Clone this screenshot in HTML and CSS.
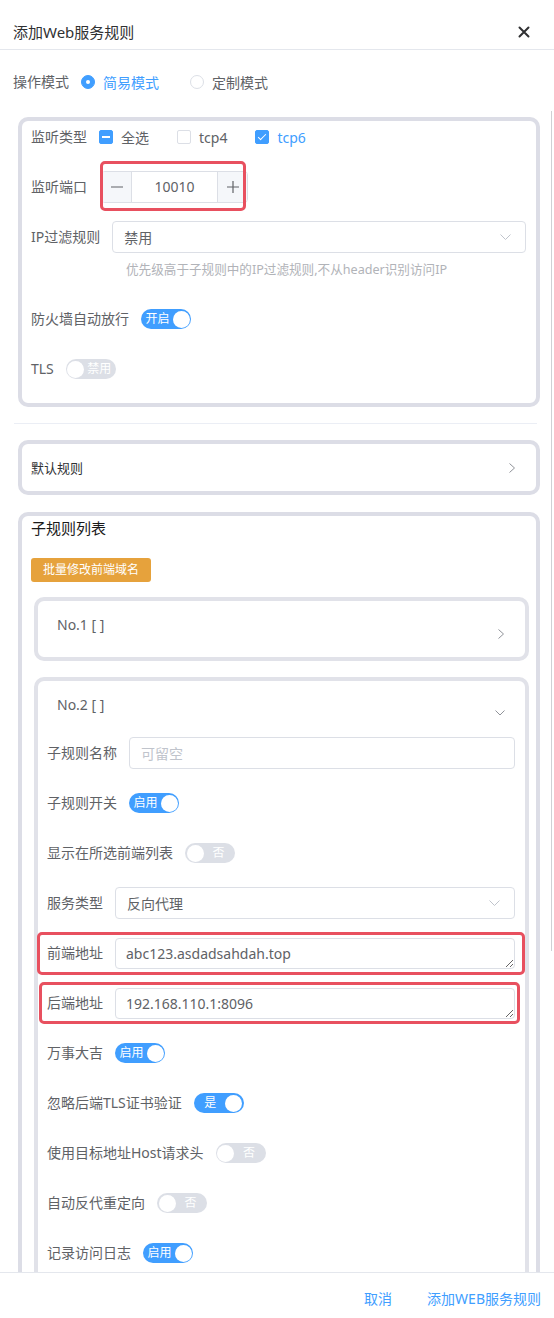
FILE: index.html
```html
<!DOCTYPE html>
<html lang="zh-CN">
<head>
<meta charset="utf-8">
<title>添加Web服务规则</title>
<link rel="stylesheet" href="styles.css">
</head>
<body>
<div class="dialog">
  <header class="dlg-head">
    <span class="dlg-title">添加Web服务规则</span>
    <svg class="close" width="12" height="12" viewBox="0 0 12 12"><path d="M1.5 1.5L10.5 10.5M10.5 1.5L1.5 10.5" stroke="#303133" stroke-width="2" stroke-linecap="round"/></svg>
  </header>

  <div class="dlg-body">
    <span class="scroll-thumb"></span>
    <div class="row mode-row">
      <span class="label">操作模式</span>
      <span class="radio on"><i class="radio-dot"></i><span class="radio-text">简易模式</span></span>
      <span class="radio"><i class="radio-dot"></i><span class="radio-text">定制模式</span></span>
    </div>

    <section class="card card-main">
      <div class="row">
        <span class="label">监听类型</span>
        <span class="check indet"><i class="box"></i><span>全选</span></span>
        <span class="check"><i class="box"></i><span>tcp4</span></span>
        <span class="check checked"><i class="box"></i><span>tcp6</span></span>
      </div>
      <div class="row">
        <span class="label">监听端口</span>
        <div class="num-wrap">
          <div class="num">
            <span class="num-btn minus"><svg width="12" height="12" viewBox="0 0 12 12"><path d="M0 6H12" stroke="#606266" stroke-width="1.2"/></svg></span>
            <span class="num-val">10010</span>
            <span class="num-btn plus"><svg width="12" height="12" viewBox="0 0 12 12"><path d="M0 6H12M6 0V12" stroke="#606266" stroke-width="1.2"/></svg></span>
          </div>
          <span class="mark mark-port"></span>
        </div>
      </div>
      <div class="row row-ip">
        <span class="label">IP过滤规则</span>
        <div class="select"><span class="sel-val">禁用</span><svg width="11" height="6" viewBox="0 0 11 6"><path d="M0.5 0.5L5.5 5.5L10.5 0.5" fill="none" stroke="#c0c4cc" stroke-width="1"/></svg></div>
      </div>
      <div class="hint">优先级高于子规则中的IP过滤规则,不从header识别访问IP</div>
      <div class="row">
        <span class="label">防火墙自动放行</span>
        <span class="switch on"><span class="sw-text">开启</span><i class="knob"></i></span>
      </div>
      <div class="row">
        <span class="label">TLS</span>
        <span class="switch off"><i class="knob"></i><span class="sw-text">禁用</span></span>
      </div>
    </section>

    <div class="divider"></div>

    <section class="card card-default">
      <span class="default-title">默认规则</span>
      <svg width="6" height="10" viewBox="0 0 6 10"><path d="M0.5 0.5L5.5 5L0.5 9.5" fill="none" stroke="#909399" stroke-width="1"/></svg>
    </section>

    <section class="card card-sub">
      <div class="sub-title">子规则列表</div>
      <div class="btn-line"><span class="btn-warn">批量修改前端域名</span></div>

      <div class="rule">
        <div class="rule-head">
          <span class="rule-title">No.1 [ ]</span>
          <svg class="chev-r" width="6" height="10" viewBox="0 0 6 10"><path d="M0.5 0.5L5.5 5L0.5 9.5" fill="none" stroke="#909399" stroke-width="1"/></svg>
        </div>
      </div>

      <div class="rule rule-open">
        <div class="rule-head">
          <span class="rule-title">No.2 [ ]</span>
          <svg class="chev-d" width="10" height="6" viewBox="0 0 10 6"><path d="M0.5 0.5L5 5L9.5 0.5" fill="none" stroke="#909399" stroke-width="1"/></svg>
        </div>
        <div class="rule-body">
          <div class="row">
            <span class="label">子规则名称</span>
            <div class="input"><span class="placeholder">可留空</span></div>
          </div>
          <div class="row">
            <span class="label">子规则开关</span>
            <span class="switch on"><span class="sw-text">启用</span><i class="knob"></i></span>
          </div>
          <div class="row">
            <span class="label">显示在所选前端列表</span>
            <span class="switch off"><i class="knob"></i><span class="sw-text">否</span></span>
          </div>
          <div class="row">
            <span class="label">服务类型</span>
            <div class="select"><span class="sel-val">反向代理</span><svg width="11" height="6" viewBox="0 0 11 6"><path d="M0.5 0.5L5.5 5.5L10.5 0.5" fill="none" stroke="#c0c4cc" stroke-width="1"/></svg></div>
          </div>
          <div class="row">
            <span class="label">前端地址</span>
            <textarea class="ta" rows="1">abc123.asdadsahdah.top</textarea>
            <span class="mark mark-front"></span>
          </div>
          <div class="row">
            <span class="label">后端地址</span>
            <textarea class="ta" rows="1">192.168.110.1:8096</textarea>
            <span class="mark mark-back"></span>
          </div>
          <div class="row">
            <span class="label">万事大吉</span>
            <span class="switch on"><span class="sw-text">启用</span><i class="knob"></i></span>
          </div>
          <div class="row">
            <span class="label">忽略后端TLS证书验证</span>
            <span class="switch on"><span class="sw-text">是</span><i class="knob"></i></span>
          </div>
          <div class="row">
            <span class="label">使用目标地址Host请求头</span>
            <span class="switch off"><i class="knob"></i><span class="sw-text">否</span></span>
          </div>
          <div class="row">
            <span class="label">自动反代重定向</span>
            <span class="switch off"><i class="knob"></i><span class="sw-text">否</span></span>
          </div>
          <div class="row">
            <span class="label">记录访问日志</span>
            <span class="switch on"><span class="sw-text">启用</span><i class="knob"></i></span>
          </div>
        </div>
      </div>
    </section>
  </div>

  <footer class="dlg-foot">
    <span class="foot-btn">取消</span>
    <span class="foot-btn">添加WEB服务规则</span>
  </footer>
</div>
</body>
</html>
```

FILE: styles.css
```css
* { box-sizing: border-box; }
html, body { margin: 0; padding: 0; }
body {
  width: 554px;
  height: 1318px;
  overflow: hidden;
  background: #fff;
  font-family: "Noto Sans", "Noto Sans CJK SC", sans-serif;
  font-size: 14px;
  color: #606266;
}

.dialog { display: flex; flex-direction: column; height: 1318px; }

.dlg-head {
  flex: none;
  height: 50px;
  padding: 15px 24px 0 13px;
  border-bottom: 1px solid #e4e7ed;
  display: flex;
  align-items: center;
  justify-content: space-between;
}
.dlg-title { font-size: 15px; line-height: 20px; color: #303133; }

.dlg-body {
  position: relative;
  flex: 1;
  min-height: 0;
  overflow: hidden;
  padding: 16px 14px 0 13px;
}
.scroll-thumb {
  position: absolute; right: 2px; top: 61px; width: 1px; height: 840px;
  background: #cfd0d4;
}

.dlg-foot {
  flex: none;
  height: 46px;
  border-top: 1px solid #e4e7ed;
  display: flex;
  justify-content: flex-end;
  gap: 35px;
  padding: 15px 13px 0 0;
}
.foot-btn { color: #409eff; line-height: 22px; }

/* form rows */
.row {
  position: relative;
  display: flex;
  align-items: center;
  height: 32px;
  margin-bottom: 18px;
}
.label { padding-right: 12px; white-space: nowrap; line-height: 32px; color: #606266; }
.mode-row { margin-bottom: 19px; }

/* radio */
.radio { display: inline-flex; align-items: center; margin-right: 31px; }
.radio-dot {
  width: 14px; height: 14px; border-radius: 50%;
  border: 1px solid #dcdfe6; background: #fff;
  margin-right: 8px; position: relative;
}
.radio.on .radio-dot { background: #409eff; border-color: #409eff; }
.radio.on .radio-dot::after {
  content: ""; position: absolute; left: 50%; top: 50%;
  width: 4px; height: 4px; margin: -2px 0 0 -2px;
  border-radius: 50%; background: #fff;
}
.radio.on .radio-text { color: #409eff; }

/* checkbox */
.check { display: inline-flex; align-items: center; margin-right: 28px; }
.check .box {
  width: 14px; height: 14px; border: 1px solid #dcdfe6; border-radius: 2px;
  background: #fff; margin-right: 8px; position: relative;
}
.check.indet .box, .check.checked .box { background: #409eff; border-color: #409eff; }
.check.indet .box::after {
  content: ""; position: absolute; left: 2px; right: 2px; top: 5px; height: 2px; background: #fff;
}
.check.checked .box::after {
  content: ""; position: absolute; left: 4px; top: 1px; width: 3px; height: 7px;
  border: 1px solid #fff; border-left: 0; border-top: 0; transform: rotate(45deg);
}
.check.checked span { color: #409eff; }

/* input number */
.num-wrap { position: relative; margin-left: 2px; }
.num {
  display: flex; width: 147px; height: 32px;
  border: 1px solid #dcdfe6; border-radius: 4px; overflow: hidden;
}
.num-btn { width: 30px; background: #f5f7fa; display: flex; align-items: center; justify-content: center; }
.num-btn.minus { border-right: 1px solid #dcdfe6; }
.num-btn.plus { border-left: 1px solid #dcdfe6; }
.num-val { flex: 1; text-align: center; line-height: 30px; color: #606266; }

/* annotation boxes */
.mark { position: absolute; border: 3px solid #e8505f; border-radius: 5px; pointer-events: none; }
.mark-port { left: -1px; top: -10px; width: 146px; height: 50px; }
.mark-front { left: -10px; right: -10px; top: -5px; bottom: -6px; }
.mark-back { left: -8px; right: -5px; top: -5px; bottom: -5px; }

/* select / input */
.select, .input {
  flex: 1; height: 32px;
  border: 1px solid #dcdfe6; border-radius: 4px;
  display: flex; align-items: center; justify-content: space-between;
  padding: 0 14px 0 11px;
}
.sel-val { color: #606266; }
.placeholder { color: #c0c4cc; }
.row-ip { margin-bottom: 8px; }
.hint {
  margin: 0 0 24px 95px;
  font-size: 12.6px; line-height: 18px; color: #b1b3b8;
}

.ta {
  flex: 1; height: 31px;
  border: 1px solid #dcdfe6; border-radius: 4px;
  padding: 4px 10px;
  font-family: inherit; font-size: 14px; line-height: 21px; color: #606266;
  resize: vertical; overflow: hidden; background: #fff; outline: none;
}

/* switch */
.switch {
  display: inline-flex; align-items: center;
  width: 50px; height: 20px; border-radius: 10px;
  padding: 0 1.5px; font-size: 12px; color: #fff;
}
.switch.on { background: #409eff; }
.switch.off { background: #dcdfe6; }
.knob { flex: none; width: 17px; height: 17px; border-radius: 50%; background: #fff; }
.sw-text { flex: 1; text-align: center; line-height: 20px; }

/* cards */
.card { border: 4px solid #dcdde6; border-radius: 10px; margin-left: 5px; }
.card-main { padding: 0 10px 0 9px; }

.divider { height: 1px; background: #ebeef5; margin: 16px 3px 16px 1px; }

.card-default {
  height: 55px; display: flex; align-items: center; justify-content: space-between;
  padding: 0 21px 0 9px;
}
.default-title { font-size: 13px; color: #303133; }

.card-sub { margin-top: 17px; padding: 0 7px 0 9px; }
.sub-title { line-height: 24px; font-size: 15px; color: #1a1a1a; }
.btn-line { margin-top: 18px; height: 24px; }
.btn-warn {
  display: inline-block; height: 24px; line-height: 24px; padding: 0 12px;
  background: #e6a23c; color: #fff; font-size: 12px; border-radius: 3px;
}

.rule { border: 4px solid #e1e2e9; border-radius: 10px; margin: 15px 0 0 3px; }
.rule + .rule { margin-top: 16px; }
.rule-head {
  height: 56px; display: flex; justify-content: space-between; align-items: flex-start;
  padding: 0 21px 0 19px;
}
.rule-title { padding-top: 14px; line-height: 20px; color: #606266; }
.chev-r { margin-top: 28px; }
.rule-open .rule-head { padding-right: 20px; }
.chev-d { margin-top: 29px; }
.rule-body { padding: 0 10px 0 9px; }
```
